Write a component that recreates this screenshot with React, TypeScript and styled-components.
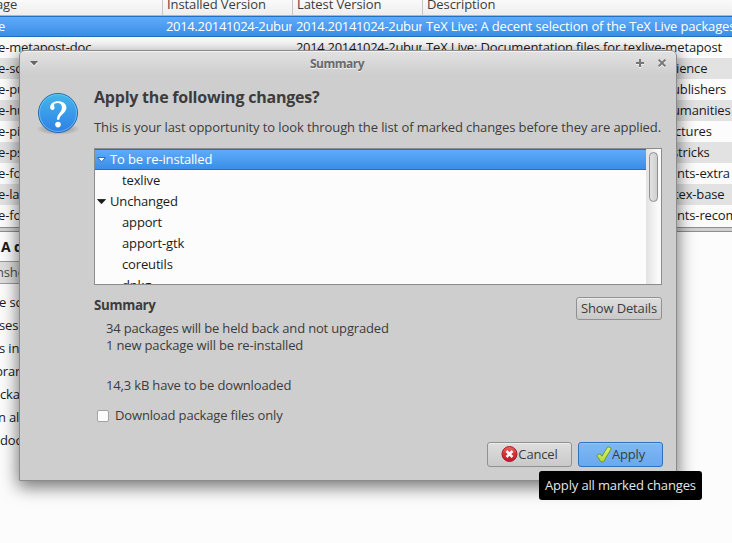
import React from "react";
import styled, { createGlobalStyle, css } from "styled-components";

const GlobalStyle = createGlobalStyle`
  * { box-sizing: border-box; }
  body {
    margin: 0;
    width: 732px;
    height: 543px;
    overflow: hidden;
    background: #fcfcfc;
    color: #1a1a1a;
    font: 13px/21px "Open Sans", "Noto Sans", sans-serif;
    letter-spacing: -0.15px;
  }
`;

const Window = styled.div`
  position: relative;
  display: flex;
  flex-direction: column;
  width: 732px;
  height: 543px;
  overflow: hidden;
`;

const TableHeader = styled.div`
  display: grid;
  grid-template-columns: 163px 130px 130px 1fr;
  height: 16px;
  background: linear-gradient(#fafafa, #eeeeee);
  border-bottom: 1px solid #b5b5b5;
  color: #3c3c3c;
`;

const HeaderCell = styled.div<{ $last?: boolean; $pad?: number; $shift?: number }>`
  height: 15px;
  padding-left: ${(p) => p.$pad ?? 4}px;
  text-indent: ${(p) => p.$shift ?? 0}px;
  line-height: 9px;
  letter-spacing: -0.1px;
  white-space: nowrap;
  border-right: ${(p) => (p.$last ? "none" : "1px solid #c6c6c6")};
`;

const selected = css`
  background: linear-gradient(#5fabfb, #3a8ee6);
  border-top: 1px solid #2070c4;
  border-bottom: 1px solid #2070c4;
  color: #fff;
  line-height: 19px;
`;

const TableRow = styled.div<{ $selected?: boolean; $shade?: boolean }>`
  display: grid;
  grid-template-columns: 166px 130px 130px 1fr;
  height: 21px;
  flex: none;
  white-space: nowrap;
  background: ${(p) => (p.$shade ? "#e2e2e2" : "#fcfcfc")};
  ${(p) => p.$selected && selected}
`;

const Cell = styled.div<{ $indent?: number }>`
  padding-left: ${(p) => p.$indent ?? 0}px;
  overflow: hidden;
`;

const NameCell = styled.div`
  margin-left: -2px;
`;

const VersionText = styled.div`
  width: 126px;
  overflow: hidden;
  letter-spacing: -0.32px;
`;

const PaneDivider = styled.div`
  height: 5px;
  flex: none;
  background: #d0d0d0;
  border-top: 1px solid #8e8e8e;
  border-bottom: 1px solid #8e8e8e;
  margin-top: 1px;
`;

const DetailTitle = styled.div`
  height: 29px;
  padding: 4px 0 0 1px;
  font-weight: 700;
  font-size: 14px;
`;

const DetailTabs = styled.div`
  width: 320px;
  height: 23px;
  border: solid #9b9b9b;
  border-width: 1px 0;
  background: #dedede;
  color: #4a4a4a;
  text-indent: -4px;
`;

const DetailText = styled.div`
  padding-top: 7px;
  line-height: 23px;
  white-space: nowrap;
`;

const DetailLine = styled.div<{ $shift: number }>`
  margin-left: ${(p) => p.$shift}px;
`;

const Dialog = styled.section`
  position: absolute;
  left: 19px;
  top: 50px;
  width: 658px;
  height: 431px;
  border: 1px solid #8b8b8b;
  border-radius: 6px 6px 0 0;
  background: linear-gradient(#e2e2e2, #cecece 24px, #cecece);
  box-shadow: inset 0 1px #f2f2f2, 0 5px 17px 1px rgba(0, 0, 0, 0.55);
  color: #3c3c3c;
  display: flex;
  flex-direction: column;
`;

const TitleBar = styled.header`
  display: grid;
  grid-template-columns: 40px 1fr 38px 22px;
  height: 25px;
  align-items: center;
  svg { display: block; }
`;

const Title = styled.h1`
  margin: 0;
  padding-right: 2px;
  text-align: center;
  font-size: 12px;
  line-height: 20px;
  font-weight: 700;
  letter-spacing: -0.5px;
  color: #6a6a6a;
  text-shadow: 0 1px #f0f0f0;
`;

const Content = styled.div`
  display: grid;
  grid-template-columns: 74px 568px;
`;

const IconColumn = styled.div`
  padding: 13px 0 0 13px;
`;

const Main = styled.div`
  display: flex;
  flex-direction: column;
`;

const Heading = styled.h2`
  margin: 9px 0 0;
  font-size: 16px;
  line-height: 24px;
  letter-spacing: -0.22px;
`;

const Line = styled.div`
  white-space: nowrap;
  letter-spacing: -0.16px;
`;

const Intro = styled(Line)`
  margin-top: 8px;
  line-height: 21px;
  letter-spacing: -0.1px;
`;

const ListBox = styled.div`
  display: grid;
  grid-template-columns: 1fr 15px;
  height: 137px;
  margin-top: 10px;
  overflow: hidden;
  border: 1px solid #8c8c8c;
  background: #fcfcfc;
  color: #1a1a1a;
`;

const ListRows = styled.div`
  height: 135px;
  overflow: hidden;
`;

const ListRow = styled.div<{ $selected?: boolean; $child?: boolean }>`
  display: flex;
  align-items: center;
  gap: 4px;
  height: 21px;
  line-height: 21px;
  padding-left: ${(p) => (p.$child ? 27 : 2)}px;
  ${(p) => p.$selected && selected}
`;

const ScrollTrack = styled.div`
  padding: 3px 0 0 3px;
  background: linear-gradient(90deg, #e2e2e2, #fafafa 12px);
`;

const ScrollThumb = styled.div`
  width: 9px;
  height: 50px;
  border: 1px solid #8f8f8f;
  border-radius: 5px;
  background: linear-gradient(90deg, #e3e3e3, #cfcfcf);
`;

const SummaryRow = styled.div`
  display: flex;
  justify-content: space-between;
  height: 35px;
  padding-top: 12px;
`;

const SummaryTitle = styled.h3`
  margin: -2px 0 0;
  font-size: 13.33px;
  line-height: 21px;
  letter-spacing: -0.35px;
`;

const Button = styled.button<{ $w: number; $h: number; $primary?: boolean }>`
  display: flex;
  align-items: center;
  justify-content: center;
  width: ${(p) => p.$w}px;
  height: ${(p) => p.$h}px;
  padding: 0;
  flex: none;
  border: 1px solid ${(p) => (p.$primary ? "#2b72bf" : "#919191")};
  border-radius: 3px;
  background: ${(p) => (p.$primary ? "linear-gradient(#7fb8f5, #69a9ee)" : "linear-gradient(#dedede, #c9c9c9)")};
  box-shadow: inset 0 1px ${(p) => (p.$primary ? "#94c4f8" : "#ececec")};
  color: #3c3c3c;
  font: inherit;
  letter-spacing: -0.15px;
  line-height: 18px;
  white-space: nowrap;
`;

const ButtonLabel = styled.span`
  padding-bottom: 2px;
`;

const SummaryText = styled.div`
  padding-left: 12px;
  height: 76px;
  line-height: 17px;
`;

const Gap = styled.div`
  height: 23px;
`;

const CheckRow = styled.label`
  display: flex;
  align-items: center;
  gap: 6px;
  height: 21px;
  margin-top: 9px;
  padding-left: 3px;
`;

const CheckBox = styled.span`
  width: 12px;
  height: 12px;
  border: 1px solid #a2a2a2;
  border-radius: 2px;
  background: #fcfcfc;
`;

const Actions = styled.div`
  display: flex;
  justify-content: flex-end;
  gap: 6px;
  margin: 16px -1px 0 0;
`;

const Tooltip = styled.div`
  position: absolute;
  left: 539px;
  top: 471px;
  width: 163px;
  height: 29px;
  border-radius: 3px;
  background: #000;
  color: #e6e6e6;
  line-height: 29px;
  padding-left: 6px;
`;

const QuestionIcon = () => (
  <svg width="48" height="48" viewBox="0 0 48 48">
    <defs>
      <linearGradient id="ball" x1="0" y1="0" x2="0" y2="1">
        <stop offset="0" stopColor="#43b7ec" />
        <stop offset="1" stopColor="#2f7fe6" />
      </linearGradient>
      <radialGradient id="shade">
        <stop offset="0.5" stopColor="#000" stopOpacity="0.2" />
        <stop offset="1" stopColor="#000" stopOpacity="0" />
      </radialGradient>
    </defs>
    <ellipse cx="25" cy="40" rx="22" ry="6" fill="url(#shade)" />
    <circle cx="25" cy="24" r="19.5" fill="url(#ball)" stroke="#2467b0" />
    <circle cx="25" cy="24" r="18.5" fill="none" stroke="#83d0fa" strokeOpacity="0.6" />
    <path
      d="M17.2 18.8C17 14.5 20.5 12.2 25 12.2C30 12.2 33.4 14.7 33.4 18.6C33.4 24.4 26.8 25.2 26.3 30.8H24C23.8 25 28.9 23.6 28.9 18.6C28.9 15.6 27.3 14 24.6 14C22.6 14 21 14.8 21 16.2C21 17.2 21.6 17.6 21.6 18.8C21.6 20 20.7 20.9 19.5 20.9C18.2 20.9 17.3 20.1 17.2 18.8Z"
      fill="#fff"
    />
    <circle cx="25" cy="35.6" r="2.8" fill="#fff" />
  </svg>
);

const CancelIcon = () => (
  <svg width="17" height="17" viewBox="0 0 17 17">
    <defs>
      <linearGradient id="red" x1="0" y1="0" x2="0" y2="1">
        <stop offset="0" stopColor="#ee6460" />
        <stop offset="0.55" stopColor="#d42e35" />
        <stop offset="1" stopColor="#bb1830" />
      </linearGradient>
    </defs>
    <circle cx="8.5" cy="8" r="7.5" fill="url(#red)" stroke="#a51b26" />
    <path d="M5.5 5L11.5 11M11.5 5L5.5 11" stroke="#fff" strokeWidth="2.5" />
  </svg>
);

const ApplyIcon = () => (
  <svg width="16" height="17" viewBox="0 0 16 17">
    <defs>
      <linearGradient id="green" x1="0" y1="0" x2="0" y2="1">
        <stop offset="0" stopColor="#e2f27c" />
        <stop offset="1" stopColor="#b2dc35" />
      </linearGradient>
    </defs>
    <path d="M0.7 9.6L3.9 7.7L6 10.2L11.9 0.6L15.3 2.4L7.5 15.8L5 15.8Z" fill="url(#green)" stroke="#6a9420" strokeWidth="0.9" strokeLinejoin="round" />
  </svg>
);

const Expander = ({ light }: { light?: boolean }) => (
  <svg width="9" height="6" viewBox="0 0 9 6">
    <path
      d="M0.5 0.5H8.5L4.5 4.8Z"
      fill={light ? "#fff" : "#1a1a1a"}
      stroke={light ? "#2a70bf" : "#1a1a1a"}
      strokeWidth={light ? 1 : 0.8}
    />
  </svg>
);

const packages = [
  { name: "e-sc", desc: "ience", x: 250 },
  { name: "e-pu", desc: "ublishers", x: 246 },
  { name: "e-hu", desc: "umanities", x: 246 },
  { name: "e-pi", desc: "ctures", x: 249 },
  { name: "e-ps", desc: "stricks", x: 246 },
  { name: "e-fo", desc: "nts-extra", x: 251 },
  { name: "e-lat", desc: "tex-base", x: 248 },
  { name: "e-fo", desc: "nts-recom", x: 251 },
];

const details = [
  { text: "e sc", x: -1 },
  { text: "ses", x: -1 },
  { text: "s in", x: -1 },
  { text: "brar", x: -5 },
  { text: "cka", x: 0 },
  { text: "n als", x: -2 },
  { text: "doc", x: 0 },
];

const VERSION = "2014.20141024-2ubuntu";

export default function App() {
  return (
    <>
      <GlobalStyle />
      <Window>
        <TableHeader>
          <HeaderCell $pad={0} $shift={-4}>age</HeaderCell>
          <HeaderCell>Installed Version</HeaderCell>
          <HeaderCell>Latest Version</HeaderCell>
          <HeaderCell $last>Description</HeaderCell>
        </TableHeader>
        <TableRow $selected>
          <NameCell>e</NameCell>
          <Cell><VersionText>{VERSION}</VersionText></Cell>
          <Cell><VersionText>{VERSION}</VersionText></Cell>
          <Cell>TeX Live: A decent selection of the TeX Live packages</Cell>
        </TableRow>
        <TableRow>
          <NameCell>e-metapost-doc</NameCell>
          <Cell />
          <Cell><VersionText>{VERSION}</VersionText></Cell>
          <Cell>TeX Live: Documentation files for texlive-metapost</Cell>
        </TableRow>
        {packages.map((p, i) => (
          <TableRow key={i} $shade={i % 2 === 0}>
            <NameCell>{p.name}</NameCell>
            <Cell />
            <Cell />
            <Cell $indent={p.x}>{p.desc}</Cell>
          </TableRow>
        ))}
        <PaneDivider />
        <DetailTitle>A d</DetailTitle>
        <DetailTabs>nsho</DetailTabs>
        <DetailText>
          {details.map((d) => (
            <DetailLine key={d.text} $shift={d.x}>{d.text}</DetailLine>
          ))}
        </DetailText>

        <Dialog>
          <TitleBar>
            <svg width="40" height="25">
              <path d="M10 10.5H18L14 15Z" fill="#f2f2f2" transform="translate(0 1)" />
              <path d="M10 10H18L14 14.5Z" fill="#666" />
            </svg>
            <Title>Summary</Title>
            <svg width="38" height="25">
              <path d="M20 13H28M24 9V17" stroke="#f2f2f2" strokeWidth="2" />
              <path d="M20 12H28M24 8V16" stroke="#777" strokeWidth="2" />
            </svg>
            <svg width="22" height="25">
              <path d="M4.6 9.6L11.4 16.4M11.4 9.6L4.6 16.4" stroke="#f2f2f2" strokeWidth="2" />
              <path d="M4.6 8.6L11.4 15.4M11.4 8.6L4.6 15.4" stroke="#777" strokeWidth="2" />
            </svg>
          </TitleBar>
          <Content>
            <IconColumn><QuestionIcon /></IconColumn>
            <Main>
              <Heading>Apply the following changes?</Heading>
              <Intro>This is your last opportunity to look through the list of marked changes before they are applied.</Intro>
              <ListBox>
                <ListRows>
                  <ListRow $selected><Expander light />To be re-installed</ListRow>
                  <ListRow $child>texlive</ListRow>
                  <ListRow><Expander />Unchanged</ListRow>
                  <ListRow $child>apport</ListRow>
                  <ListRow $child>apport-gtk</ListRow>
                  <ListRow $child>coreutils</ListRow>
                  <ListRow $child>dpkg</ListRow>
                </ListRows>
                <ScrollTrack><ScrollThumb /></ScrollTrack>
              </ListBox>
              <SummaryRow>
                <SummaryTitle>Summary</SummaryTitle>
                <Button $w={86} $h={23}><ButtonLabel>Show Details</ButtonLabel></Button>
              </SummaryRow>
              <SummaryText>
                <Line>34 packages will be held back and not upgraded</Line>
                <Line>1 new package will be re-installed</Line>
                <Gap />
                <Line>14,3 kB have to be downloaded</Line>
              </SummaryText>
              <CheckRow><CheckBox />Download package files only</CheckRow>
              <Actions>
                <Button $w={85} $h={25}><CancelIcon /><ButtonLabel>Cancel</ButtonLabel></Button>
                <Button $w={85} $h={25} $primary><ApplyIcon /><ButtonLabel>Apply</ButtonLabel></Button>
              </Actions>
            </Main>
          </Content>
        </Dialog>
        <Tooltip>Apply all marked changes</Tooltip>
      </Window>
    </>
  );
}
